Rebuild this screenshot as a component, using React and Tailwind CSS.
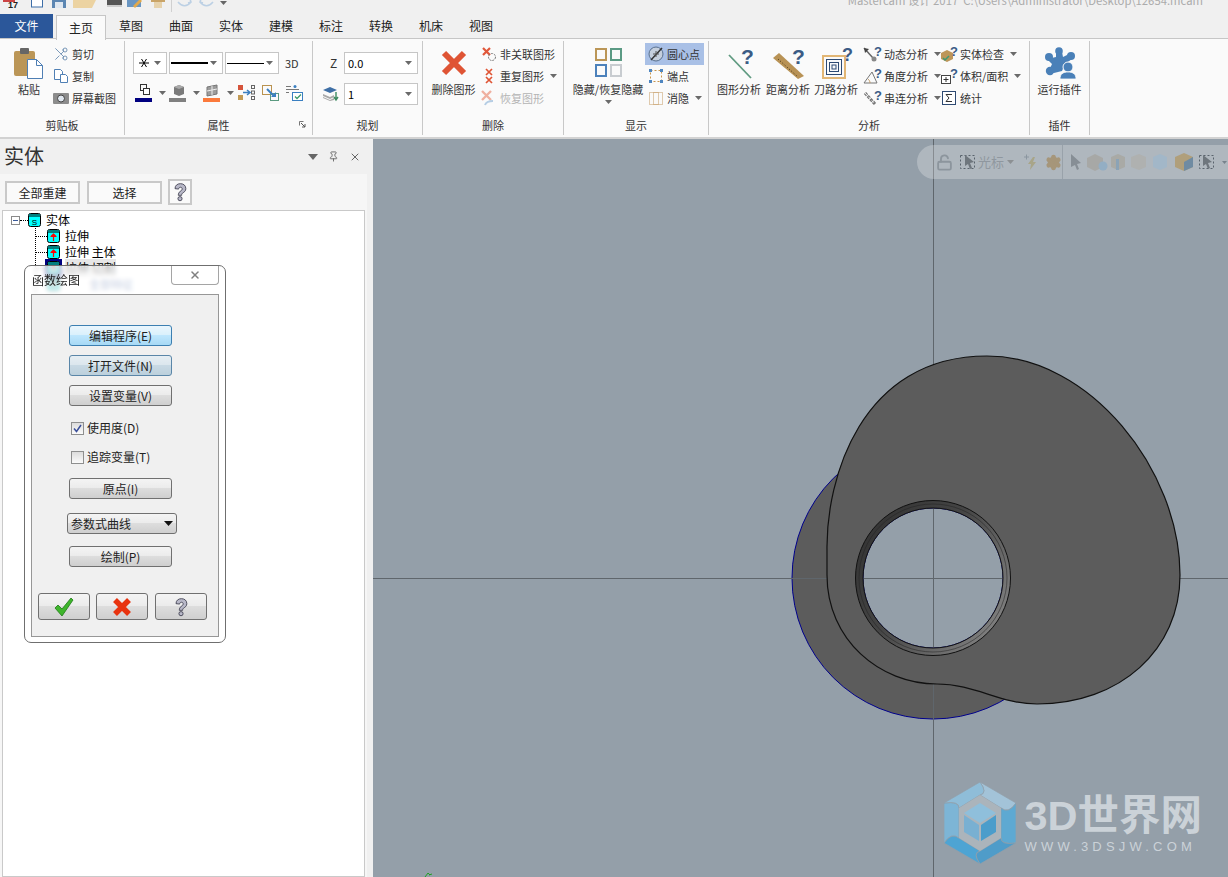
import React from "react";
import { Scissors, Settings, LockOpen, Pin, X } from "lucide-react";

const FONT = { fontFamily: '"Noto Sans CJK SC", "Liberation Sans", sans-serif' };

const CAM =
  "M827 550C826 480 860 356 987 356C1090 356 1180 470 1180 575C1180 650 1120 704 1037 704C1000 704 975 684 937 684C880 684 827 640 827 575Z";
const HOLE = "M863 578a70 70 0 1 0 140 0a70 70 0 1 0 -140 0Z";

const Caret = ({ className = "" }) => (
  <svg width="7" height="4" viewBox="0 0 7 4" className={`shrink-0 ${className}`}>
    <path d="M0 0h7L3.500 4z" fill="#6a6a6a" />
  </svg>
);

const Ico = ({ children, w = 16, h = 16, className = "" }) => (
  <svg width={w} height={h} viewBox={`0 0 ${w} ${h}`} className={`shrink-0 overflow-visible ${className}`}>
    {children}
  </svg>
);

const Q = ({ x, y, s = 14 }) => (
  <text x={x} y={y} fontSize={s} fontWeight="700" fill="#3b5b85" fontFamily="Liberation Sans">?</text>
);

const QatIcons = () => (
  <svg width="235" height="14" viewBox="0 0 235 14" className="shrink-0">
    <rect x="3" y="0" width="12" height="2" fill="#c44" />
    <text x="8" y="8" fontSize="9" fontWeight="700" fill="#222" fontFamily="Liberation Sans">17</text>
    <rect x="31.500" y="-3" width="11" height="10" fill="#fff" stroke="#3d6ea8" />
    <rect x="52" y="-3" width="14" height="11" fill="#5c86b2" />
    <rect x="55" y="2" width="8" height="6" fill="#dfe7f0" />
    <path d="M73 -2h24l-5 10h-19z" fill="#ecd3a2" />
    <rect x="107" y="-2" width="15" height="7" fill="#555" />
    <rect x="107" y="5" width="15" height="2" fill="#ccc" />
    <rect x="127" y="-2" width="14" height="9" fill="#6a96c2" />
    <path d="M133 6l7-7 2 2-7 7z" fill="#e2a94b" />
    <rect x="151" y="-2" width="14" height="4" fill="#c9a468" />
    <rect x="154" y="2" width="8" height="6" fill="#e6d2ac" />
    <rect x="171" y="0" width="1" height="12" fill="#d0d0d0" />
    <path d="M178 2c4 5 9 5 13 0M190 -1l1 3-3 1" fill="none" stroke="#bcd0e4" strokeWidth="1.500" />
    <path d="M200 2c4 5 9 5 13 0M201 -1l-1 3 3 1" fill="none" stroke="#bcd0e4" strokeWidth="1.500" />
    <path d="M220 1h7l-3.500 4z" fill="#666" />
  </svg>
);

const TitleBar = () => (
  <div className="h-[14px] flex justify-between overflow-hidden bg-[#f0f0f0]">
    <QatIcons />
    <div className="pr-[25px] -mt-[7px] text-[11.3px] leading-[14px] text-[#ababab] whitespace-nowrap">
      Mastercam 设计 2017 &nbsp;C:\Users\Administrator\Desktop\12654.mcam
    </div>
  </div>
);

const TABS = ["草图", "曲面", "实体", "建模", "标注", "转换", "机床", "视图"];

const TabRow = () => (
  <div className="h-[25px] flex bg-[#f0f0f0] border-b border-[#c6c6c6] text-[12px] text-[#222]">
    <div className="w-[53px] h-[24px] bg-[#2b579a] text-white flex items-center justify-center">文件</div>
    <div className="ml-[3px] w-[50px] h-[25px] mt-px bg-[#fafafa] border border-b-0 border-[#c6c6c6] flex items-center justify-center relative z-10">
      主页
    </div>
    {TABS.map((t) => (
      <div key={t} className="w-[50px] h-[24px] flex items-center justify-center">{t}</div>
    ))}
  </div>
);

const Group = ({ label, className = "", children, launcher }) => (
  <div className={`shrink-0 h-[94px] flex flex-col border-r border-[#c8c8c8] ${className}`}>
    <div className="h-[74px] flex">{children}</div>
    <div className="h-[20px] flex items-center justify-center text-[11px] text-[#333] relative">
      {label}
      {launcher && (
        <svg width="7" height="7" viewBox="0 0 7 7" className="absolute right-[6px] top-[6px]">
          <path d="M0.500 0.500h4M0.500 0.500v4" stroke="#777" fill="none" />
          <path d="M2 2l4 4M6 3v3h-3" stroke="#555" fill="none" />
        </svg>
      )}
    </div>
  </div>
);

const Small = ({ icon, label, caret, disabled, active, className = "" }) => (
  <div
    className={`h-[22px] flex items-center gap-[3px] text-[11px] whitespace-nowrap ${disabled ? "text-[#b4b4b4]" : "text-[#333]"} ${active ? "bg-[#a9c0e6]" : ""} ${className}`}
  >
    {icon}
    <span>{label}</span>
    {caret && <Caret className="ml-[3px]" />}
  </div>
);

const Big = ({ icon, label, className = "" }) => (
  <div className={`flex flex-col items-center pt-[3px] shrink-0 ${className}`}>
    <div className="h-[33px] flex items-end justify-center">{icon}</div>
    <div className="mt-[3px] text-[11px] leading-[14px] text-[#333] whitespace-nowrap">{label}</div>
  </div>
);

const Combo = ({ className = "", children }) => (
  <div className={`h-[22px] bg-white border border-[#c6c6c6] flex items-center justify-between pr-[5px] ${className}`}>
    {children}
    <Caret />
  </div>
);

const Clipboard = () => (
  <Group label="剪贴板" className="w-[125px]">
    <div className="flex pl-[14px] pt-[2px]">
      <Big
        className="w-[30px]"
        label="粘贴"
        icon={
          <Ico w={30} h={31}>
            <rect x="0" y="3" width="21" height="25" rx="2" fill="#bb9657" />
            <rect x="6" y="0" width="9" height="6" rx="1" fill="#666" />
            <path d="M13.500 11.500h9l6 6v13h-15z" fill="#fff" stroke="#4f7fb4" />
            <path d="M22.500 11.500v6h6" fill="none" stroke="#4f7fb4" />
          </Ico>
        }
      />
      <div className="ml-[9px] flex flex-col">
        <Small label="剪切" icon={<Scissors size={16} strokeWidth={1.2} color="#5a80a8" className="shrink-0 -scale-x-100" />} />
        <Small
          label="复制"
          icon={
            <Ico>
              <path d="M1.500 1.500h6l2 2v8h-8z" fill="#fff" stroke="#4f7fb4" />
              <path d="M7.500 6.500h5l2 2v6h-7z" fill="#fff" stroke="#4f7fb4" />
            </Ico>
          }
        />
        <Small
          label="屏幕截图"
          icon={
            <Ico>
              <rect x="0" y="3" width="16" height="11" rx="1" fill="#8c8c8c" />
              <circle cx="8" cy="8.500" r="3.500" fill="#dfe6ee" stroke="#444" />
            </Ico>
          }
        />
      </div>
    </div>
  </Group>
);

const Colored = ({ fill, children }) => (
  <div className="flex items-center shrink-0">
    <Ico w={18} h={18}>
      {children}
      <rect x="0" y="14" width="17" height="4" fill={fill} />
    </Ico>
    <Caret className="ml-[6px]" />
  </div>
);

const Attributes = () => (
  <Group label="属性" className="w-[188px]" launcher>
    <div className="pl-[8px] pt-[11px] flex flex-col">
      <div className="flex items-center gap-[2px]">
        <Combo className="w-[34px] pl-[5px]">
          <svg width="10" height="10" viewBox="0 0 10 10">
            <path d="M0 5h10M2.500 9L7.500 1M7.500 9L2.500 1" stroke="#000" />
          </svg>
        </Combo>
        <Combo className="w-[54px] pl-[1px]">
          <div className="w-[37px] h-[2px] bg-black" />
        </Combo>
        <Combo className="w-[54px] pl-[1px]">
          <div className="w-[37px] h-px bg-black" />
        </Combo>
        <span className="ml-[4px] text-[11px] text-[#333]">3D</span>
      </div>
      <div className="mt-[10px] flex items-center pl-[2px]">
        <Colored fill="#000080">
          <rect x="5.500" y="0.500" width="6" height="6" fill="none" stroke="#333" />
          <rect x="8.500" y="4.500" width="6" height="6" fill="#fff" stroke="#333" />
        </Colored>
        <div className="w-[3px] shrink-0" />
        <Colored fill="#808080">
          <path d="M5 3l5-2 5 2v7l-5 2-5-2z" fill="#7a7a7a" />
          <path d="M5 3l5 2 5-2-5-2z" fill="#aaa" />
        </Colored>
        <div className="w-[3px] shrink-0" />
        <Colored fill="#fb7a3c">
          <path d="M4 3l10-2v9l-10 2z" fill="#9c9c9c" stroke="#777" />
          <path d="M9 2v9M4 7l10-2" stroke="#eee" />
        </Colored>
        <Ico w={18} h={18} className="ml-[4px]">
          <rect x="0" y="1" width="5" height="5" fill="#d5533a" />
          <rect x="0" y="11" width="5" height="5" fill="#c29a55" />
          <path d="M5 8.500h6M9 6l3 2.500L9 11" stroke="#3a7fc1" strokeWidth="1.500" fill="none" />
          <rect x="13.500" y="1.500" width="3" height="3" fill="none" stroke="#666" />
          <rect x="13.500" y="7" width="3" height="3" fill="none" stroke="#666" />
          <rect x="13.500" y="12.500" width="3" height="3" fill="none" stroke="#666" />
        </Ico>
        <Ico w={18} h={18} className="ml-[6px]">
          <rect x="0.500" y="1.500" width="9" height="9" fill="none" stroke="#b9924f" />
          <rect x="8.500" y="9.500" width="8" height="7" fill="none" stroke="#5a9a80" />
          <path d="M5 5l7 7" stroke="#3a7fc1" strokeWidth="2" />
          <path d="M9 13h5v-5z" fill="#3a7fc1" />
        </Ico>
        <Ico w={18} h={18} className="ml-[6px]">
          <path d="M0 2.500h5M0 5.500h13M0 8.500h3" stroke="#777" />
          <circle cx="9" cy="2.500" r="1.500" fill="#3a7fc1" />
          <rect x="6.500" y="8.500" width="10" height="8" fill="#fff" stroke="#3a7fc1" />
          <path d="M9 12.500l2 2 4-4" stroke="#3d9a6a" fill="none" strokeWidth="1.300" />
        </Ico>
      </div>
    </div>
  </Group>
);

const Planes = () => (
  <Group label="规划" className="w-[110px]">
    <div className="pl-[10px] pt-[11px] flex flex-col">
      <div className="flex items-center">
        <span className="w-[21px] pl-[7px] text-[12px] text-[#333]">Z</span>
        <Combo className="w-[74px] pl-[3px] text-[11px] text-black"><span>0.0</span></Combo>
      </div>
      <div className="flex items-center mt-[9px]">
        <div className="w-[21px]">
          <Ico w={16} h={16}>
            <path d="M0 4l7-3 7 3-7 3z" fill="#3f6fa6" />
            <path d="M0 8l7 3 4-2v2l-4 2-7-3zM0 11l7 3 4-2v2l-4 1-7-3z" fill="#a8a8a8" />
            <path d="M13 6v7M11 11l2 3 2-3" stroke="#3d8a60" strokeWidth="1.400" fill="none" />
          </Ico>
        </div>
        <Combo className="w-[74px] pl-[3px] text-[11px] text-black"><span>1</span></Combo>
      </div>
    </div>
  </Group>
);

const DeleteGroup = () => (
  <Group label="删除" className="w-[141px]">
    <div className="pl-[8px] pt-[2px] flex">
      <Big
        className="w-[45px]"
        label="删除图形"
        icon={
          <Ico w={26} h={26} className="mb-[3px]">
            <path d="M3 3l20 20M23 3L3 23" stroke="#df5434" strokeWidth="6" fill="none" />
          </Ico>
        }
      />
      <div className="ml-[5px] flex flex-col">
        <Small
          label="非关联图形"
          icon={
            <Ico>
              <path d="M2 2l7 7M9 2l-7 7" stroke="#e0573a" strokeWidth="2.200" fill="none" />
              <circle cx="11" cy="11" r="3.500" fill="none" stroke="#777" strokeDasharray="2 1" />
            </Ico>
          }
        />
        <Small
          label="重复图形"
          caret
          icon={
            <Ico>
              <path d="M5 1l6 6M11 1L5 7M5 9l6 6M11 9l-6 6" stroke="#df5434" strokeWidth="1.700" fill="none" />
            </Ico>
          }
        />
        <Small
          label="恢复图形"
          disabled
          icon={
            <Ico>
              <path d="M1 1l9 9M10 1l-9 9" stroke="#efb0a0" strokeWidth="2.400" fill="none" />
              <path d="M4 15c1-3 4-4 8-4" stroke="#b5cde4" strokeWidth="2" fill="none" />
            </Ico>
          }
        />
      </div>
    </div>
  </Group>
);

const DisplayGroup = () => (
  <Group label="显示" className="w-[145px]">
    <div className="pl-[8px] pt-[2px] flex">
      <div className="w-[72px] flex flex-col items-center pt-[3px] shrink-0">
        <div className="h-[33px] flex items-end">
          <Ico w={27} h={31} className="mb-[1px]">
            <rect x="1" y="2" width="10" height="11" fill="none" stroke="#bb9657" strokeWidth="2" />
            <rect x="16" y="2" width="10" height="11" fill="none" stroke="#5b9a84" strokeWidth="2" />
            <rect x="1" y="18" width="10" height="11" fill="none" stroke="#4c81bb" strokeWidth="2" />
            <rect x="16" y="18" width="10" height="11" fill="none" stroke="#c8ccd0" strokeWidth="2" />
          </Ico>
        </div>
        <div className="mt-[3px] text-[11px] leading-[14px] text-[#333] whitespace-nowrap">隐藏/恢复隐藏</div>
        <Caret className="mt-[4px]" />
      </div>
      <div className="flex flex-col ml-px">
        <Small
          label="圆心点"
          active
          className="w-[59px] pl-[3px] gap-[3px]"
          icon={
            <Ico>
              <circle cx="8" cy="8" r="7" fill="#c5cfdd" stroke="#58708f" />
              <path d="M3 14L14 2" stroke="#333" strokeWidth="1.500" />
              <path d="M5 8h6M8 5v6" stroke="#555" />
            </Ico>
          }
        />
        <Small
          label="端点"
          className="pl-[3px] gap-[3px]"
          icon={
            <Ico>
              <rect x="2.500" y="2.500" width="11" height="11" fill="none" stroke="#c9944a" strokeDasharray="2 2" />
              <rect x="1" y="1" width="3" height="3" fill="#4f86c0" />
              <rect x="12" y="1" width="3" height="3" fill="#4f86c0" />
              <rect x="1" y="12" width="3" height="3" fill="#4f86c0" />
              <rect x="12" y="12" width="3" height="3" fill="#4f86c0" />
            </Ico>
          }
        />
        <Small
          label="消隐"
          caret
          className="pl-[3px] gap-[3px]"
          icon={
            <Ico>
              <rect x="1.500" y="2.500" width="13" height="12" fill="none" stroke="#c49a62" strokeDasharray="1 1" />
              <rect x="5.500" y="2.500" width="5" height="12" fill="none" stroke="#c49a62" strokeDasharray="1 1" />
            </Ico>
          }
        />
      </div>
    </div>
  </Group>
);

const Ask = ({ children }) => (
  <Ico w={18} h={16}>
    {children}
    <Q x={11} y={10} s={13} />
  </Ico>
);

const Analysis = () => (
  <Group label="分析" className="w-[321px]">
    <div className="pl-[8px] pt-[2px] flex">
      <Big
        className="w-[44px]"
        label="图形分析"
        icon={
          <Ico w={32} h={32}>
            <path d="M6 8l22 23" stroke="#5f9a80" strokeWidth="1.800" />
            <Q x={18} y={17} s={21} />
          </Ico>
        }
      />
      <Big
        className="w-[44px] ml-[5px]"
        label="距离分析"
        icon={
          <Ico w={32} h={32}>
            <path d="M1 11l6-5 25 23-6 3z" fill="#b89255" />
            <path d="M6 12l20 18" stroke="#3a2c14" strokeDasharray="1 2" />
            <Q x={20} y={17} s={21} />
          </Ico>
        }
      />
      <Big
        className="w-[44px] ml-[4px]"
        label="刀路分析"
        icon={
          <Ico w={36} h={32}>
            <rect x="5" y="9" width="22" height="22" fill="none" stroke="#e2b675" strokeWidth="2" />
            <rect x="8.500" y="12.500" width="15" height="15" fill="none" stroke="#2e4a72" />
            <rect x="11.500" y="15.500" width="9" height="9" fill="none" stroke="#2e4a72" />
            <rect x="14" y="18" width="4" height="4" fill="none" stroke="#2e4a72" />
            <Q x={24} y={14} s={18} />
          </Ico>
        }
      />
      <div className="ml-[5px] flex flex-col w-[78px] shrink-0">
        <Small
          label="动态分析"
          caret
          className="gap-[2px]"
          icon={
            <Ask>
              <path d="M1 2l9 10" stroke="#666" strokeWidth="1.500" />
              <path d="M1 2l1 5 4-4z" fill="#444" />
              <circle cx="11" cy="13" r="2.500" fill="#888" />
            </Ask>
          }
        />
        <Small
          label="角度分析"
          caret
          className="gap-[2px]"
          icon={
            <Ask>
              <path d="M1 15h13L9 4z" fill="none" stroke="#777" />
              <path d="M7 15c0-2-1-3-2-4" fill="none" stroke="#c49a62" />
            </Ask>
          }
        />
        <Small
          label="串连分析"
          caret
          className="gap-[2px]"
          icon={
            <Ask>
              <path d="M2 3l10 11" stroke="#777" strokeWidth="3" strokeDasharray="3 1" />
              <path d="M2 3l10 11" stroke="#eee" strokeDasharray="3 2" />
            </Ask>
          }
        />
      </div>
      <div className="flex flex-col">
        <Small
          label="实体检查"
          caret
          icon={
            <Ico>
              <path d="M0 7l6-3 6 3v6l-6 3-6-3z" fill="#bd9659" />
              <path d="M2 12l2 2 4-4" stroke="#3e9a74" strokeWidth="1.500" fill="none" />
              <Q x={9} y={10} s={13} />
            </Ico>
          }
        />
        <Small
          label="体积/面积"
          caret
          icon={
            <Ico>
              <rect x="0.500" y="7.500" width="9" height="8" fill="#fff" stroke="#444" />
              <path d="M2.500 11.500h5M5 9v5" stroke="#333" />
              <Q x={9} y={10} s={13} />
            </Ico>
          }
        />
        <Small
          label="统计"
          icon={
            <Ico>
              <rect x="1.500" y="1.500" width="13" height="13" fill="#fff" stroke="#2e4a72" />
              <path d="M11 4.500H5l3 3.500-3 3.500h6" fill="none" stroke="#333" />
            </Ico>
          }
        />
      </div>
    </div>
  </Group>
);

const Plugins = () => (
  <Group label="插件" className="w-[60px]">
    <div className="w-full pt-[2px] flex justify-center">
      <Big
        label="运行插件"
        icon={
          <Ico w={33} h={32}>
            <circle cx="16" cy="4" r="3.800" fill="#4a80b8" />
            <circle cx="6" cy="10" r="4" fill="#4a80b8" />
            <circle cx="28" cy="9" r="4" fill="#4a80b8" />
            <circle cx="7" cy="24" r="4.200" fill="#4a80b8" />
            <path d="M13 5L19 5L20 10L28 6L29 12L22 17L19 24L11 26L5 26L9 17L4 12L13 10Z" fill="#4a80b8" />
            <circle cx="25" cy="20" r="5" fill="#4a80b8" stroke="#fafafa" />
            <path d="M17 32c0-5 3-7 8-7s8 2 8 7z" fill="#4a80b8" stroke="#fafafa" strokeWidth="0.800" />
          </Ico>
        }
      />
    </div>
  </Group>
);

const Ribbon = () => (
  <div className="h-[100px] pt-[2px] bg-[#fafafa] border-b-2 border-[#d2d2d2] flex">
    <Clipboard />
    <Attributes />
    <Planes />
    <DeleteGroup />
    <DisplayGroup />
    <Analysis />
    <Plugins />
  </div>
);

const Flat = ({ className = "", children }) => (
  <div className={`h-[23px] bg-[#fafafa] border-2 border-[#c9c9c9] flex items-center justify-center text-[12px] text-[#222] ${className}`}>
    {children}
  </div>
);

const HelpMark = ({ size = 24 }) => (
  <svg width={size} height={size} viewBox="0 0 24 24">
    <path
      d="M6 8c0-4 3-6 6.500-6S19 4 19 8c0 3-2 4-4 5.500-1 .8-1 1.500-1 2.500h-4c0-2 .5-3.500 2-4.500 1.500-1.200 2.600-1.800 2.600-3.300 0-1-.8-1.900-2-1.900-1.300 0-2.100.8-2.300 2.200z"
      fill="#b8b8c8"
      stroke="#3a3a4a"
    />
    <circle cx="12" cy="20" r="2.500" fill="#b8b8c8" stroke="#3a3a4a" />
  </svg>
);

const Cylinder = ({ kind }) => (
  <svg width="13" height="14" viewBox="0 0 13 14" className="shrink-0">
    <rect x="0.500" y="0.500" width="12" height="13" rx="2" fill="#00ffff" stroke="#000" />
    <rect x="1" y="1" width="11" height="3" fill="#007f7f" />
    {kind === "s" ? (
      <text x="6.500" y="12" textAnchor="middle" fontSize="8" fill="#000" fontFamily="Liberation Sans">S</text>
    ) : (
      <path d="M6.500 5v7M4 7.500l2.500-2.500L9 7.500M3.500 7.500h6" stroke="#f00" fill="none" strokeWidth="1.200" />
    )}
  </svg>
);

const TreeRow = ({ kind, label, selected }) => (
  <div className="h-[16px] flex items-center gap-[5px] text-[12px] text-black whitespace-nowrap">
    <div className={selected ? "outline-2 outline-[#000080] bg-[#000080]" : ""}>
      <Cylinder kind={kind} />
    </div>
    <span className={selected ? "bg-[#e6e6e6]" : ""}>{label}</span>
  </div>
);

const Tree = () => (
  <div className="ml-[2px] mr-[2px] h-[667px] bg-white border border-[#c9c9c9] pt-[1px] relative">
    <div className="flex items-center pl-[8px]">
      <div className="w-[9px] h-[9px] border border-[#8a8a8a] flex items-center justify-center shrink-0">
        <div className="w-[5px] h-px bg-[#3a5a9a]" />
      </div>
      <div className="w-[8px] border-t border-dotted border-black" />
      <TreeRow kind="s" label="实体" />
    </div>
    <div className="ml-[32px] border-l border-dotted border-black w-fit">
      {["拉伸", "拉伸 主体", "拉伸 切割"].map((label, i) => (
        <div key={label} className="flex items-center">
          <div className="w-[11px] border-t border-dotted border-black" />
          <TreeRow kind="e" label={label} selected={i === 2} />
        </div>
      ))}
      <div className="flex items-center pl-[11px]">
        <TreeRow kind="e" label="" />
        <span className="ml-[24px] text-[11px] text-[#3a5a9a]">全部特征</span>
      </div>
    </div>
  </div>
);

const BTN = {
  plain: "border-[#707070] bg-[linear-gradient(#f4f4f4_0%,#ebebeb_49%,#dddddd_50%,#cfcfcf_100%)]",
  hot: "border-[#3c7fb1] bg-[linear-gradient(#eaf6fd_0%,#d9f0fc_49%,#bee6fd_50%,#a7d9f5_100%)]",
  focus: "border-[#5a86a8] bg-[linear-gradient(#e6eef3_0%,#dbe6ed_49%,#c8d9e4_50%,#bcd0dc_100%)]",
};

const DlgButton = ({ kind = "plain", className = "", children }) => (
  <div className={`border rounded-[3px] flex items-center justify-center text-[12px] text-[#222] ${BTN[kind]} ${className}`}>
    {children}
  </div>
);

const Check = ({ checked, label, className = "" }) => (
  <div className={`flex items-center h-[14px] ml-[39px] gap-[3px] text-[12px] text-[#222] ${className}`}>
    <div className="w-[13px] h-[13px] border border-[#8e8f8f] bg-[linear-gradient(#dcdcdc,#fbfbfb)] flex items-center justify-center">
      {checked && (
        <svg width="9" height="9" viewBox="0 0 9 9">
          <path d="M1 4.500l2.500 3L8 1" stroke="#3a4f9a" strokeWidth="1.500" fill="none" />
        </svg>
      )}
    </div>
    <span>{label}</span>
  </div>
);

const FunctionDialog = () => (
  <div className="absolute left-[24px] top-[126px] w-[202px] h-[378px] z-20 rounded-[7px] border border-[#6f6f6f] bg-white/70 backdrop-blur-[2px] px-[6px] pb-[5px] flex flex-col">
    <div className="h-[28px] shrink-0 relative text-[12px] text-[#222] leading-[28px] pl-px">
      函数绘图
      <div className="absolute right-0 top-0 w-[48px] h-[19px] border border-t-0 border-[#a5a5a5] rounded-b-[4px] bg-white/60 flex items-center justify-center">
        <X size={12} strokeWidth={3} color="#808080" />
      </div>
    </div>
    <div className="flex-1 bg-[#f0f0f0] border border-[#979797] flex flex-col pt-[30px]">
      <DlgButton kind="hot" className="w-[103px] h-[21px] ml-[37px]">编辑程序(E)</DlgButton>
      <DlgButton kind="focus" className="w-[103px] h-[21px] ml-[37px] mt-[9px]">打开文件(N)</DlgButton>
      <DlgButton className="w-[103px] h-[21px] ml-[37px] mt-[9px]">设置变量(V)</DlgButton>
      <div className="w-full mt-[15px]">
        <Check checked label="使用度(D)" />
        <Check label="追踪变量(T)" className="mt-[15px]" />
      </div>
      <DlgButton className="w-[103px] h-[21px] ml-[37px] mt-[14px]">原点(I)</DlgButton>
      <div className={`w-[110px] h-[21px] ml-[35px] mt-[14px] border border-[#707070] rounded-[3px] flex items-center justify-between pl-[3px] pr-[3px] text-[12px] text-[#222] ${BTN.plain}`}>
        <span>参数式曲线</span>
        <svg width="9" height="5" viewBox="0 0 9 5"><path d="M0 0h9L4.500 5z" fill="#111" /></svg>
      </div>
      <DlgButton className="w-[103px] h-[21px] ml-[37px] mt-[12px]">绘制(P)</DlgButton>
      <div className="flex gap-[6px] mt-[26px] ml-[6px]">
        <DlgButton className="w-[52px] h-[27px]">
          <svg width="20" height="20" viewBox="0 0 20 20">
            <path d="M1 11l3-3 4 4L17 1l2 2L8 19z" fill="#3fb52c" stroke="#1d7a14" strokeWidth="0.800" />
          </svg>
        </DlgButton>
        <DlgButton className="w-[52px] h-[27px]">
          <svg width="20" height="20" viewBox="0 0 20 20">
            <path d="M3 3l14 14M17 3L3 17" stroke="#e8330f" strokeWidth="5.500" />
          </svg>
        </DlgButton>
        <DlgButton className="w-[52px] h-[27px] ml-px"><HelpMark size={20} /></DlgButton>
      </div>
    </div>
  </div>
);

const LeftPanel = () => (
  <div className="w-[373px] shrink-0 bg-[#f0f0f0] relative">
    <div className="h-[35px] flex items-center justify-between pl-[4px] pr-[12px]">
      <span className="text-[20px] text-[#333] -mt-[2px]">实体</span>
      <div className="flex items-center gap-[10px] text-[#666]">
        <svg width="10" height="6" viewBox="0 0 10 6"><path d="M0 0h10L5 6z" fill="#666" /></svg>
        <Pin size={11} strokeWidth={2} />
        <X size={12} strokeWidth={2} />
      </div>
    </div>
    <div className="bg-[#f6f6f6] mr-[6px] h-[703px]">
      <div className="h-[36px] flex items-start pl-[5px] pt-[7px] gap-[7px]">
        <Flat className="w-[75px]">全部重建</Flat>
        <Flat className="w-[75px]">选择</Flat>
        <div className="w-[24px] h-[26px] -mt-[2px] -ml-[1px] bg-[#fafafa] border-2 border-[#c9c9c9] flex items-center justify-center">
          <HelpMark size={20} />
        </div>
      </div>
      <Tree />
    </div>
    <FunctionDialog />
  </div>
);

const CadDrawing = () => (
  <svg viewBox="373 139 855 738" className="absolute inset-0 w-full h-full">
    <defs>
      <linearGradient id="ring" x1="0" y1="0" x2="1" y2="0.700">
        <stop offset="0" stopColor="#2e2e2e" />
        <stop offset="0.500" stopColor="#454545" />
        <stop offset="1" stopColor="#808080" />
      </linearGradient>
    </defs>
    <path
      d={`M792 578a141 141 0 1 0 282 0a141 141 0 1 0 -282 0Z ${HOLE}`}
      fillRule="evenodd"
      fill="#5c5c5c"
      stroke="#00008b"
      strokeWidth="1"
    />
    <path d="M373 578.500H1228M933.500 139V877" stroke="#5f666c" strokeWidth="1" fill="none" />
    <path d={`${CAM} ${HOLE}`} fillRule="evenodd" fill="#5c5c5c" />
    <path d={CAM} fill="none" stroke="#111" strokeWidth="1.200" />
    <path
      d={`M855.500 578a77.500 77.500 0 1 0 155 0a77.500 77.500 0 1 0 -155 0Z ${HOLE}`}
      fillRule="evenodd"
      fill="url(#ring)"
    />
    <circle cx="933" cy="578" r="77.500" fill="none" stroke="#111" strokeWidth="1" />
    <circle cx="933" cy="578" r="74" fill="none" stroke="#222" strokeWidth="0.500" />
    <circle cx="933" cy="578" r="70" fill="none" stroke="#111" strokeWidth="1" />
    <path d="M425 877l3-4 2 2M432 874l-3 1" stroke="#22a022" fill="none" />
  </svg>
);

const FloatBar = () => (
  <div className="absolute right-0 top-[6px] w-[311px] h-[34px] rounded-l-full bg-white/25 flex items-center pl-[19px] text-[13px] text-[#8f979f] whitespace-nowrap">
    <LockOpen size={17} color="#8c959d" strokeWidth={2.6} className="shrink-0" />
    <svg width="18" height="18" viewBox="0 0 18 18" className="ml-[6px] shrink-0">
      <rect x="1.500" y="2.500" width="14" height="13" fill="none" stroke="#59636d" strokeDasharray="2 2" />
      <path d="M6 2l9 7-4 1 2 5-2 1-2-5-3 2z" fill="#6e767d" />
    </svg>
    <span className="ml-[1px] shrink-0">光标</span>
    <Caret className="ml-[3px] opacity-50" />
    <svg width="13" height="18" viewBox="0 0 13 18" className="ml-[9px] shrink-0">
      <path d="M1 4h5M3.500 1.500v5" stroke="#8b96a0" />
      <path d="M10 4L5 11h3l-1 6 6-8h-3l2-5z" fill="#a8a589" />
    </svg>
    <Settings size={17} color="#a6967a" fill="#a6967a" className="ml-[9px] shrink-0" />
    <div className="w-px h-[34px] bg-[#99a2aa] shrink-0" />
    <svg width="129" height="18" viewBox="0 0 129 18" className="ml-[7px] shrink-0">
      <path d="M1 1l10 9-4 1 2 5-2 1-2-5-4 2z" fill="#868e95" />
      <path d="M17 5l8-4 8 4v9l-8 4-8-4z" fill="#a7a8a6" />
      <circle cx="33" cy="13" r="4.500" fill="#93aec4" />
      <path d="M41 4l7-3 7 3v10l-7 3-7-3z" fill="#a9aaa6" />
      <rect x="46" y="6" width="3" height="11" fill="#8ba3b6" />
      <path d="M61 4l8-3 7 3v10l-7 3-8-3z" fill="#afb1b0" />
      <path d="M83 4l7-3 7 3v10l-7 3-7-3z" fill="#a2b7c8" />
      <path d="M105 4l9-4 9 4v10l-9 4-9-4z" fill="#b09f7b" />
      <path d="M114 9l9-5v10l-9 4z" fill="#6f8ba2" />
    </svg>
    <svg width="29" height="18" viewBox="0 0 29 18" className="shrink-0">
      <rect x="0.500" y="2.500" width="14" height="13" fill="none" stroke="#59636d" strokeDasharray="2 2" />
      <path d="M4 2l9 7-4 1 2 5-2 1-2-5-3 2z" fill="#6e767d" />
      <path d="M23 8h5l-2.500 3z" fill="#77828c" />
    </svg>
  </div>
);

const HEX = [[36, 0], [72, 21], [72, 61], [36, 82], [0, 61], [0, 21]];
const INNER = [[36, 13], [57, 26], [57, 56], [36, 69], [15, 56], [15, 26]];
const BLADES = ["#a3c3d8", "#5ea9d2", "#4f9cc9", "#4ea4d3", "#7db5d6", "#8fbdd8"];

const Logo = () => (
  <svg width="72" height="82" viewBox="0 0 72 82" className="shrink-0">
    {HEX.map((p, i) => {
      const a = HEX[(i + 1) % 6];
      const b = INNER[(i + 1) % 6];
      const c = INNER[i];
      const ctrl = [(p[0] + c[0]) / 2 + (a[0] - p[0]) * 0.22, (p[1] + c[1]) / 2 + (a[1] - p[1]) * 0.22];
      const ctrl2 = [(a[0] + b[0]) / 2 + (HEX[(i + 2) % 6][0] - a[0]) * 0.22, (a[1] + b[1]) / 2 + (HEX[(i + 2) % 6][1] - a[1]) * 0.22];
      return (
        <path
          key={i}
          d={`M${p[0]} ${p[1]}L${a[0]} ${a[1]}Q${ctrl2[0]} ${ctrl2[1]} ${b[0]} ${b[1]}L${c[0]} ${c[1]}Q${ctrl[0]} ${ctrl[1]} ${p[0]} ${p[1]}Z`}
          fill={BLADES[i]}
          stroke="#949fa9"
          strokeWidth="0.700"
        />
      );
    })}
    <path d="M36 13L57 26V56L36 69L15 56V26Z" fill="#abb4bb" />
    <path d="M36 21L52 31L36 41L20 31Z" fill="#8fbfdb" />
    <path d="M20 33L35 43V59L20 50Z" fill="#79b0d2" />
    <path d="M52 33L37 43V59L52 50Z" fill="#4b9dcb" />
  </svg>
);

const Watermark = () => (
  <div className="absolute right-[26px] bottom-[13px] flex items-center">
    <Logo />
    <div className="ml-[8px] flex flex-col text-[#cbd2d8]">
      <div className="text-[41.5px] leading-[46px] font-bold whitespace-nowrap" style={{ fontFamily: '"Liberation Sans", "Noto Sans CJK SC", sans-serif' }}>
        3D世界网
      </div>
      <div className="text-[13px] leading-[14px] mt-[1px] tracking-[4.2px] whitespace-nowrap" style={{ fontFamily: '"Liberation Sans", sans-serif' }}>
        WWW.3DSJW.COM
      </div>
    </div>
  </div>
);

export default function App() {
  return (
    <div className="w-[1228px] h-[877px] overflow-hidden flex flex-col bg-[#f0f0f0]" style={FONT}>
      <TitleBar />
      <TabRow />
      <Ribbon />
      <div className="flex-1 flex min-h-0">
        <LeftPanel />
        <div className="flex-1 relative bg-[#949fa9] overflow-hidden">
          <CadDrawing />
          <FloatBar />
          <Watermark />
        </div>
      </div>
    </div>
  );
}
